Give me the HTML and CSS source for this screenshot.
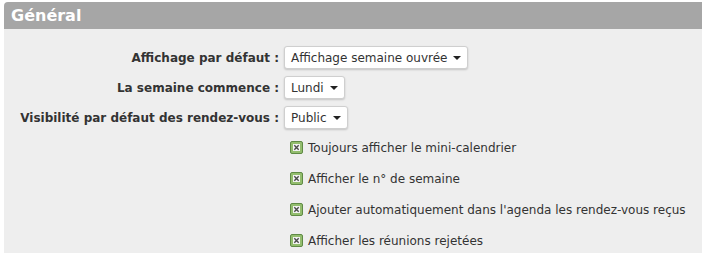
FILE: index.html
```html
<!DOCTYPE html>
<html lang="fr">
<head>
<meta charset="utf-8">
<link rel="stylesheet" href="styles.css">
</head>
<body>
<div class="panel">
  <div class="panel-head">Général</div>
  <div class="panel-body">
    <div class="rows">
      <div class="row">
        <div class="label">Affichage par défaut :</div>
        <div class="select">Affichage semaine ouvrée <span class="caret"></span></div>
      </div>
      <div class="row">
        <div class="label">La semaine commence :</div>
        <div class="select">Lundi <span class="caret"></span></div>
      </div>
      <div class="row">
        <div class="label">Visibilité par défaut des rendez-vous :</div>
        <div class="select">Public <span class="caret"></span></div>
      </div>
    </div>
    <div class="checks">
      <div class="check"><svg class="cb" width="13" height="13" viewBox="0 0 13 13"><rect x="0.5" y="0.5" width="12" height="12" rx="1.5" fill="#93bd6e" stroke="#5f8a45"/><rect x="3" y="3" width="7" height="7" fill="#f4f4f4"/><path d="M4.3 4.3 L8.7 8.7 M8.7 4.3 L4.3 8.7" stroke="#4a4a4a" stroke-width="1.4"/></svg>Toujours afficher le mini-calendrier</div>
      <div class="check"><svg class="cb" width="13" height="13" viewBox="0 0 13 13"><rect x="0.5" y="0.5" width="12" height="12" rx="1.5" fill="#93bd6e" stroke="#5f8a45"/><rect x="3" y="3" width="7" height="7" fill="#f4f4f4"/><path d="M4.3 4.3 L8.7 8.7 M8.7 4.3 L4.3 8.7" stroke="#4a4a4a" stroke-width="1.4"/></svg>Afficher le n° de semaine</div>
      <div class="check"><svg class="cb" width="13" height="13" viewBox="0 0 13 13"><rect x="0.5" y="0.5" width="12" height="12" rx="1.5" fill="#93bd6e" stroke="#5f8a45"/><rect x="3" y="3" width="7" height="7" fill="#f4f4f4"/><path d="M4.3 4.3 L8.7 8.7 M8.7 4.3 L4.3 8.7" stroke="#4a4a4a" stroke-width="1.4"/></svg>Ajouter automatiquement dans l'agenda les rendez-vous reçus</div>
      <div class="check"><svg class="cb" width="13" height="13" viewBox="0 0 13 13"><rect x="0.5" y="0.5" width="12" height="12" rx="1.5" fill="#93bd6e" stroke="#5f8a45"/><rect x="3" y="3" width="7" height="7" fill="#f4f4f4"/><path d="M4.3 4.3 L8.7 8.7 M8.7 4.3 L4.3 8.7" stroke="#4a4a4a" stroke-width="1.4"/></svg>Afficher les réunions rejetées</div>
    </div>
  </div>
</div>
</body>
</html>
```
FILE: styles.css
```css
html, body {
  margin: 0;
  padding: 0;
  background: #ffffff;
  overflow: hidden;
}
body {
  font-family: "DejaVu Sans", sans-serif;
  font-size: 12px;
  color: #333333;
}
.panel {
  margin: 2px 0 0 4px;
  width: 720px;
}
.panel-head {
  height: 27px;
  line-height: 27px;
  background: #a6a6a6;
  color: #ffffff;
  font-weight: bold;
  font-size: 16px;
  padding-left: 7px;
  border-radius: 4px 4px 0 0;
}
.panel-body {
  background: #eeeeee;
  padding: 17px 0 0 0;
  min-height: 230px;
  box-sizing: border-box;
}
.rows {
  display: flex;
  flex-direction: column;
  gap: 7px;
}
.row {
  display: grid;
  grid-template-columns: 275px auto;
  column-gap: 5px;
  align-items: center;
  height: 23px;
  justify-content: start;
}
.label {
  text-align: right;
  font-weight: bold;
  white-space: nowrap;
}
.select {
  display: inline-flex;
  align-items: center;
  justify-self: start;
  height: 23px;
  box-sizing: border-box;
  padding: 0 6px 0 6px;
  background: #ffffff;
  border: 1px solid #cfcfcf;
  border-radius: 3px;
  box-shadow: 0 1px 2px rgba(0,0,0,0.18);
  white-space: nowrap;
}
.caret {
  display: inline-block;
  width: 0;
  height: 0;
  margin-left: 6px;
  border-left: 4px solid transparent;
  border-right: 4px solid transparent;
  border-top: 4px solid #222222;
}
.checks {
  padding-left: 286px;
  padding-top: 3px;
}
.check {
  display: flex;
  align-items: center;
  height: 31px;
  white-space: nowrap;
}
.cb {
  margin-right: 5px;
  flex: none;
}
```
